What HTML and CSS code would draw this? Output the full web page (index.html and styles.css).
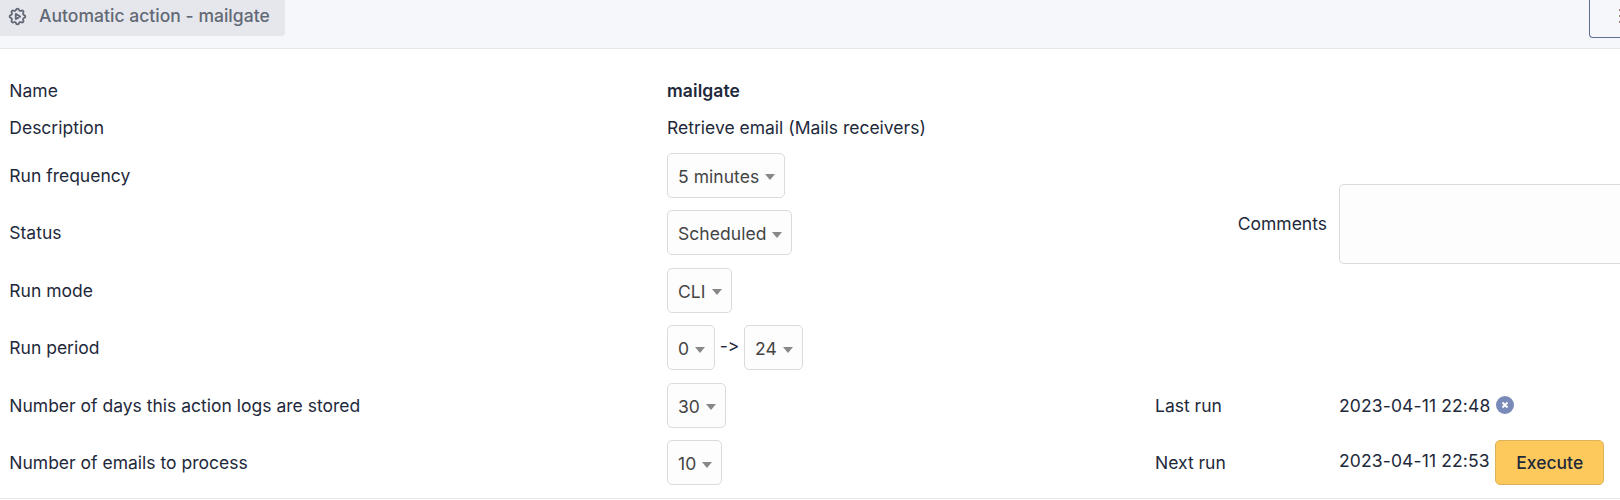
FILE: index.html
```html
<!DOCTYPE html>
<html lang="en">
<head>
<meta charset="utf-8">
<title>Automatic action - mailgate</title>
<link rel="stylesheet" href="styles.css">
</head>
<body>
<header class="header">
  <div class="title">
    <svg class="gear" viewBox="0 0 24 24" fill="none" stroke="currentColor" stroke-width="2.1" stroke-linecap="round" stroke-linejoin="round"><path d="M10.325 4.317c.426-1.756 2.924-1.756 3.35 0a1.724 1.724 0 0 0 2.573 1.066c1.543-.94 3.31.826 2.37 2.37a1.724 1.724 0 0 0 1.065 2.572c1.756.426 1.756 2.924 0 3.35a1.724 1.724 0 0 0-1.066 2.573c.94 1.543-.826 3.31-2.37 2.37a1.724 1.724 0 0 0-2.572 1.065c-.426 1.756-2.924 1.756-3.35 0a1.724 1.724 0 0 0-2.573-1.066c-1.543.94-3.31-.826-2.37-2.37a1.724 1.724 0 0 0-1.065-2.572c-1.756-.426-1.756-2.924 0-3.35a1.724 1.724 0 0 0 1.066-2.573c-.94-1.543.826-3.31 2.37-2.37 1 .608 2.296.07 2.572-1.065z"/><path d="M10 9l5 3-5 3z"/></svg>
    <span class="title-text">Automatic action - mailgate</span>
  </div>
  <div class="menu"><span class="dots"><i></i><i></i><i></i></span></div>
</header>
<main class="form">
  <div class="label">Name</div>
  <div class="value"><strong>mailgate</strong></div>
  <div class="comments-label">Comments</div>
  <div class="comments"><div class="textarea"></div></div>

  <div class="label">Description</div>
  <div class="value">Retrieve email (Mails receivers)</div>

  <div class="label">Run frequency</div>
  <div class="value"><span class="select">5 minutes</span></div>

  <div class="label">Status</div>
  <div class="value"><span class="select">Scheduled</span></div>

  <div class="label">Run mode</div>
  <div class="value"><span class="select">CLI</span></div>

  <div class="label">Run period</div>
  <div class="value"><span class="select">0</span><span class="arrow">-&gt;</span><span class="select">24</span></div>

  <div class="label">Number of days this action logs are stored</div>
  <div class="value"><span class="select">30</span></div>
  <div class="run-label">Last run</div>
  <div class="run-value"><span class="date">2023-04-11 22:48</span>
    <svg class="clear" viewBox="0 0 18 18"><circle cx="9" cy="9" r="9" fill="#7a8ab8"/><path d="M6.5 6.5l5 5M11.5 6.5l-5 5" stroke="#fff" stroke-width="1.9"/></svg>
  </div>

  <div class="label">Number of emails to process</div>
  <div class="value"><span class="select">10</span></div>
  <div class="run-label">Next run</div>
  <div class="run-value"><span class="date next-date">2023-04-11 22:53</span><button class="execute">Execute</button></div>
</main>
</body>
</html>
```
FILE: styles.css
```css
* { box-sizing: border-box; }
body {
  margin: 0;
  height: 500px;
  overflow: hidden;
  background: #fff;
  color: #1e293b;
  font: 17.5px/25px Inter, sans-serif;
}
.header {
  display: flex;
  justify-content: space-between;
  align-items: flex-start;
  height: 49px;
  background: #f5f7fb;
  border-bottom: 1px solid #e6e7e9;
}
.title {
  display: flex;
  align-items: center;
  gap: 11px;
  width: 285px;
  height: 36px;
  padding: 0 0 4px 7px;
  background: #e6e7ec;
  border-bottom-right-radius: 3px;
  color: #626976;
  font-weight: 500;
}
.title-text { padding-bottom: 2px; letter-spacing: .03px; }
.gear { width: 21px; height: 21px; }
.menu {
  display: flex;
  width: 31px;
  height: 38px;
  border: solid #606f91;
  border-width: 0 0 1px 1px;
  border-bottom-left-radius: 4px;
  overflow: hidden;
}
.dots {
  display: flex;
  flex-direction: column;
  gap: 4px;
  padding: 9px 0 0 29px;
}
.dots i { width: 2px; height: 2px; background: #9b817c; }
.form {
  display: grid;
  grid-template-columns: 667px 488px 184px 281px;
  grid-template-rows: 37px 37px 58px 57px 58px 57px 58px 57px;
  height: 450px;
  padding-top: 23px;
  border-bottom: 1px solid #e6e7e9;
}
.label, .value, .run-label, .run-value, .comments, .comments-label {
  display: flex;
  align-items: center;
  white-space: nowrap;
}
.label { grid-column: 1; padding-left: 9.3px; }
.value { grid-column: 2; }
.run-label { grid-column: 3; }
.run-value { grid-column: 4; gap: 5.5px; }
.comments-label {
  grid-area: 1 / 3 / span 6;
  justify-content: flex-end;
  padding: 0 12px 2px 0;
}
.comments { grid-area: 1 / 4 / span 6; }
.textarea {
  width: 281px;
  height: 80px;
  background: #fdfdfd;
  border: 1px solid #d9dbde;
  border-right: 0;
  border-radius: 5px 0 0 5px;
}
strong { font-weight: 600; letter-spacing: .08px; }
.select {
  display: inline-flex;
  align-items: center;
  gap: 6px;
  height: 45px;
  padding: 2px 9px 0 10px;
  background: #fdfdfd;
  border: 1px solid #d9dbde;
  border-radius: 5px;
  color: #444;
  letter-spacing: .05px;
}
.select::after {
  content: "";
  margin-top: 2px;
  border: solid transparent;
  border-width: 6px 5px 0;
  border-top-color: #888;
}
.arrow {
  width: 29px;
  padding-bottom: 4px;
  text-align: center;
  font-feature-settings: "calt" 0;
}
.clear { width: 18px; height: 18px; }
.date { letter-spacing: .13px; }
.next-date { padding-bottom: 4px; }
.execute {
  width: 109px;
  height: 45px;
  padding: 0;
  background: #fec95c;
  border: 1px solid #dcb35c;
  border-radius: 5px;
  color: #1e293b;
  font: 500 17.5px/25px Inter, sans-serif;
}
```
